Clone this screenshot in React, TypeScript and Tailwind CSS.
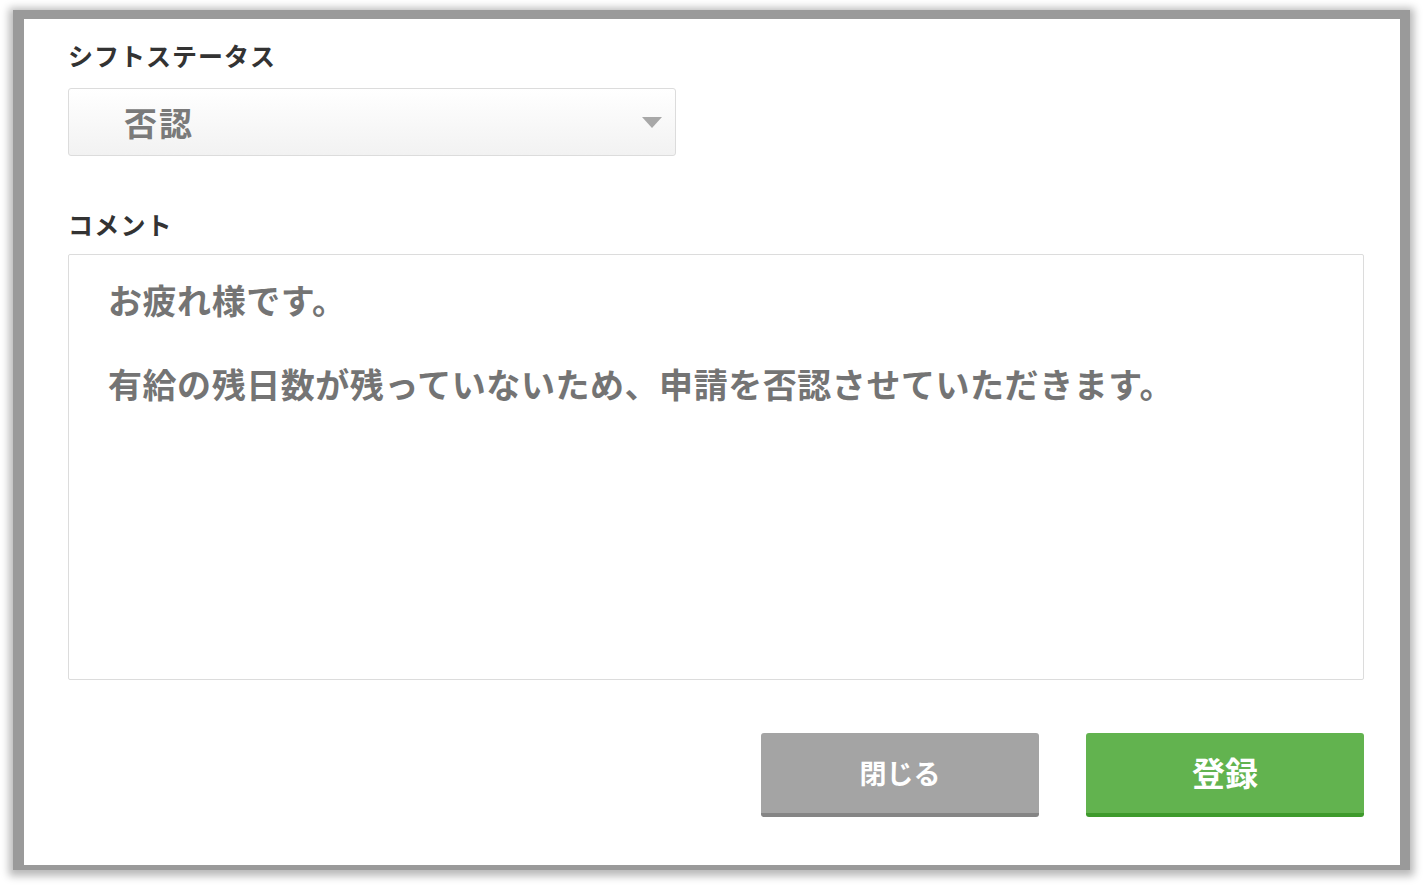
export default function App() {
  const font = { fontFamily: '"Noto Sans CJK JP", "Noto Sans", sans-serif' };
  return (
    <div className="w-[1424px] h-[887px] bg-white overflow-hidden" style={font}>
      <div className="ml-[13px] mt-[10px] w-[1397px] h-[860px] border-l-[11px] border-t-[9px] border-r-[10px] border-b-[5px] border-[#9a9a9a] shadow-[0_2px_8px_4px_rgba(0,0,0,0.28)] bg-white">
        <div className="pl-[44px] pr-[36px] pt-[21px] flex flex-col">
          <div className="text-[25px] leading-[30px] font-bold text-[#333] tracking-[1px]">シフトステータス</div>
          <div className="mt-[18px] w-[608px] h-[68px] border border-[#dcdcdc] rounded-[3px] bg-gradient-to-b from-white to-[#f2f2f2] flex items-center justify-between pl-[55px] pr-[13px]">
            <span className="text-[33px] font-bold text-[#7a7a7a] leading-none tracking-[2px]">否認</span>
            <svg width="20" height="11" viewBox="0 0 20 11">
              <polygon points="0,0 20,0 10,11" fill="#a8a8a8" />
            </svg>
          </div>
          <div className="mt-[53px] text-[25px] leading-[30px] font-bold text-[#333] tracking-[1.2px]">コメント</div>
          <div className="mt-[15px] w-[1296px] h-[426px] border border-[#dcdcdc] rounded-[2px] pt-[24px] pl-[39px] text-[34px] leading-[42px] font-bold text-[#747474] tracking-[0.55px]">
            <div>お疲れ様です。</div>
            <div>&nbsp;</div>
            <div>有給の残日数が残っていないため、申請を否認させていただきます。</div>
          </div>
          <div className="mt-[53px] flex justify-end gap-[47px]">
            <button className="w-[278px] h-[84px] rounded-[3px] bg-[#a4a4a4] border-b-[4px] border-[#858585] text-white text-[27px] font-bold flex items-center justify-center">閉じる</button>
            <button className="w-[278px] h-[84px] rounded-[3px] bg-[#62b34f] border-b-[4px] border-[#3e9a2c] text-white text-[33px] font-bold flex items-center justify-center">登録</button>
          </div>
        </div>
      </div>
    </div>
  );
}
